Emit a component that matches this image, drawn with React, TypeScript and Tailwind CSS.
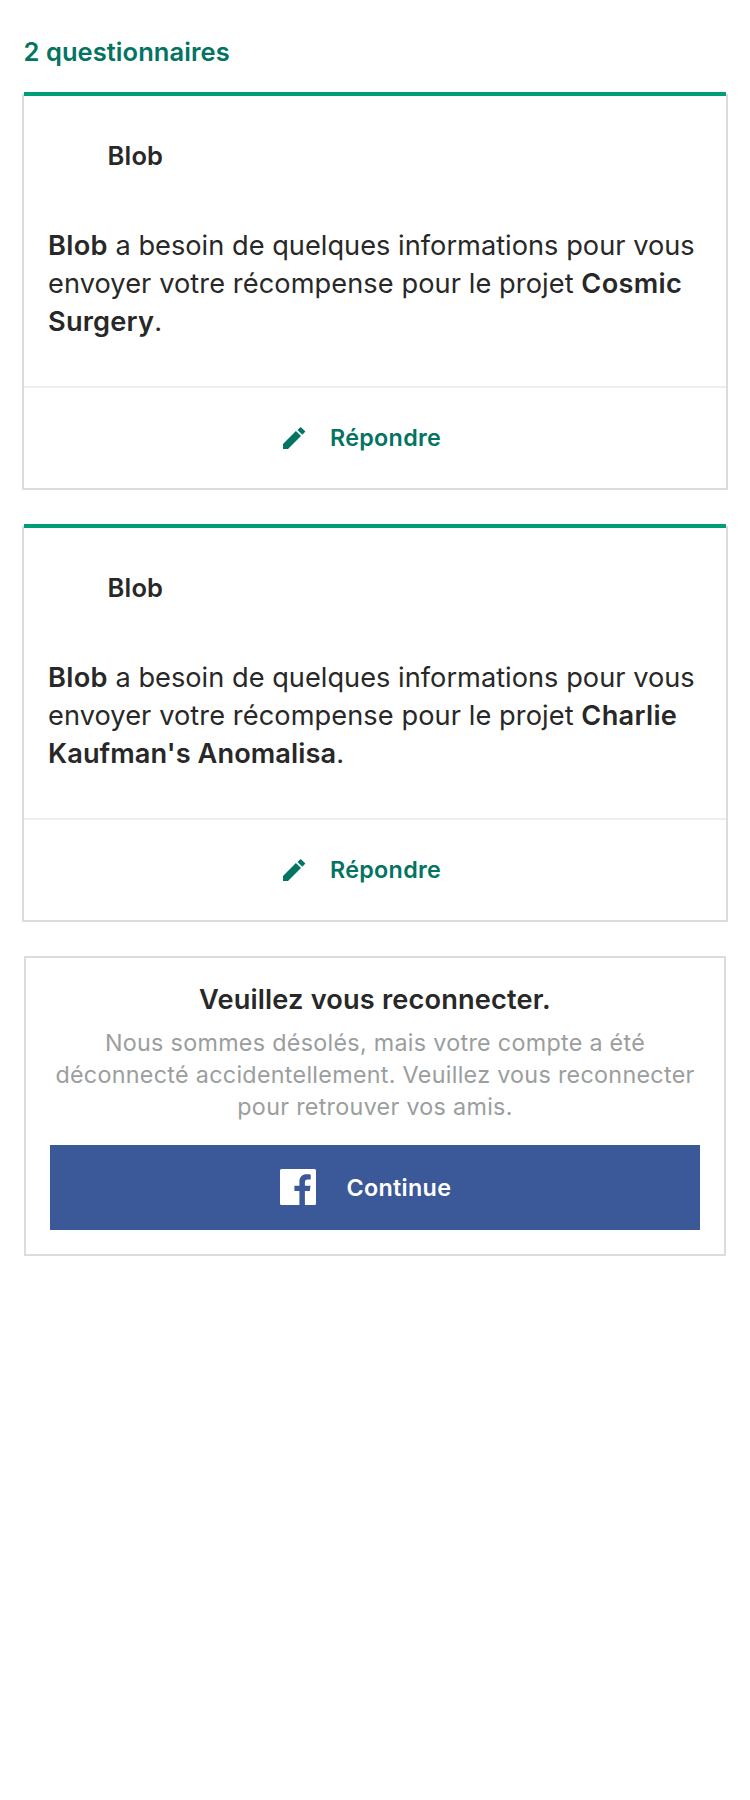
import React from "react";

function PencilIcon() {
  return (
    <svg viewBox="0 0 22 22" className="h-[22px] w-[22px] overflow-visible" fill="#037362" aria-hidden="true">
      <path d="M0 16.900 12.900 4l5.100 5L5 22H0z" />
      <path d="M14.500 3 17.600-.1 22.400 4.600 19.300 7.700z" />
    </svg>
  );
}

function FacebookIcon() {
  return (
    <svg viewBox="0 0 36 36" className="h-9 w-9" fill="#fff" aria-hidden="true">
      <path d="M1.500 0h33A1.500 1.500 0 0 1 36 1.500v33a1.500 1.500 0 0 1-1.500 1.500H24.900V22h4.900l.7-5.200h-5.600v-3.300c0-1.900.6-3 2.900-3h2.900V5.500c-.5-.1-2.200-.2-4.200-.2-4.200 0-7.100 2.600-7.100 7.200v4.300h-5V22h5v14H1.500A1.500 1.500 0 0 1 0 34.500v-33A1.500 1.500 0 0 1 1.500 0z" />
    </svg>
  );
}

function SurveyCard({ children }: { children: React.ReactNode }) {
  return (
    <article className="mx-[22px]">
      <div className="relative z-10 mx-0.5 h-1 bg-[#009e74]" />
      <div className="-mt-0.5 h-[396px] border-x-2 border-b-2 border-[#dcdcdc]">
        <h2 className="pt-[46px] pl-[83.5px] text-[25.5px] leading-8 font-semibold tracking-[0.2px]">
          Blob
        </h2>
        <p className="mt-[55px] pl-6 text-[27.2px] leading-[38px] whitespace-nowrap">{children}</p>
        <button className="mt-[45px] flex h-[102px] w-full items-center border-t-2 border-[#ededf2] pl-[258.5px] text-[23.3px] leading-8 font-semibold tracking-[0.3px] text-[#037362]">
          <PencilIcon />
          <span className="ml-[25.5px]">Répondre</span>
        </button>
      </div>
    </article>
  );
}

export default function App() {
  return (
    <main className="flex min-h-[1800px] w-[750px] flex-col bg-white pt-9 font-['Inter',sans-serif] text-[#282828]">
      <h1 className="mb-6 pl-[23.5px] text-[25.5px] leading-8 font-semibold tracking-[0.06px] text-[#037362]">
        2 questionnaires
      </h1>
      <div className="flex flex-col gap-[34px]">
        <SurveyCard>
          <b className="font-semibold tracking-[0.3px]">Blob</b>
          <span className="tracking-[0.02px]"> a besoin de quelques informations pour vous</span>
          <br />
          <span className="tracking-[0.08px]">envoyer votre récompense pour le projet </span>
          <b className="font-semibold tracking-[0.3px]">Cosmic</b>
          <br />
          <b className="font-semibold tracking-[0.2px]">Surgery</b>.
        </SurveyCard>
        <SurveyCard>
          <b className="font-semibold tracking-[0.3px]">Blob</b>
          <span className="tracking-[0.02px]"> a besoin de quelques informations pour vous</span>
          <br />
          <span className="tracking-[0.08px]">envoyer votre récompense pour le projet </span>
          <b className="font-semibold tracking-[0.3px]">Charlie</b>
          <br />
          <b className="font-semibold tracking-[0.08px]">Kaufman's Anomalisa</b>.
        </SurveyCard>
        <section className="mx-6 h-[300px] border-2 border-[#dcdcdc] px-6 pt-[23px] text-center whitespace-nowrap">
          <h2 className="text-[27.2px] leading-[38px] font-semibold tracking-[0.165px]">
            Veuillez vous reconnecter.
          </h2>
          <p className="mt-2 text-[23.3px] leading-8 tracking-[0.3px] text-[#9b9e9e]">
            Nous sommes désolés, mais votre compte a été
            <br />
            déconnecté accidentellement. Veuillez vous reconnecter
            <br />
            pour retrouver vos amis.
          </p>
          <button className="mt-[22px] flex h-[85px] w-[650px] items-center bg-[#3b5998] pb-px pl-[230px] text-[23.3px] leading-8 font-semibold tracking-[0.32px] text-white">
            <FacebookIcon />
            <span className="ml-[30.5px] pt-0.5">Continue</span>
          </button>
        </section>
      </div>
    </main>
  );
}
